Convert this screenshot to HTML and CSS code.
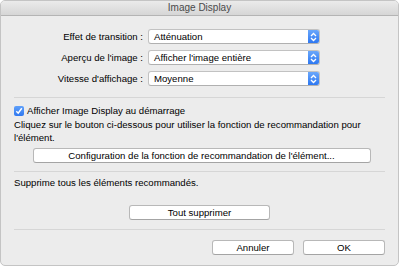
FILE: index.html
```html
<!DOCTYPE html>
<html lang="fr">
<head>
<meta charset="utf-8">
<link rel="stylesheet" href="styles.css">
</head>
<body>
<div class="window">
  <div class="titlebar">Image Display</div>
  <div class="content">
    <div class="form">
      <label class="lbl">Effet de transition :</label>
      <div class="popup"><span class="val">Atténuation</span><span class="step"><svg width="7" height="10" viewBox="0 0 7 10"><path d="M1 4 L3.5 1.5 L6 4 M1 6 L3.5 8.5 L6 6" fill="none" stroke="#fff" stroke-width="1.3"/></svg></span></div>
      <label class="lbl">Aperçu de l'image :</label>
      <div class="popup"><span class="val">Afficher l'image entière</span><span class="step"><svg width="7" height="10" viewBox="0 0 7 10"><path d="M1 4 L3.5 1.5 L6 4 M1 6 L3.5 8.5 L6 6" fill="none" stroke="#fff" stroke-width="1.3"/></svg></span></div>
      <label class="lbl">Vitesse d'affichage :</label>
      <div class="popup"><span class="val">Moyenne</span><span class="step"><svg width="7" height="10" viewBox="0 0 7 10"><path d="M1 4 L3.5 1.5 L6 4 M1 6 L3.5 8.5 L6 6" fill="none" stroke="#fff" stroke-width="1.3"/></svg></span></div>
    </div>
    <hr class="sep sep1">
    <div class="check">
      <span class="box"><svg width="8" height="8" viewBox="0 0 8 8"><path d="M1.3 4.2 L3.2 6.2 L6.8 1.3" fill="none" stroke="#fff" stroke-width="1.5"/></svg></span>
      <span>Afficher Image Display au démarrage</span>
    </div>
    <p class="para">Cliquez sur le bouton ci-dessous pour utiliser la fonction de recommandation pour l'élément.</p>
    <div class="center"><button class="btn wide">Configuration de la fonction de recommandation de l'élément...</button></div>
    <hr class="sep sep2">
    <p class="para2">Supprime tous les éléments recommandés.</p>
    <div class="center center2"><button class="btn mid">Tout supprimer</button></div>
    <hr class="sep sep3">
    <div class="actions">
      <button class="btn small">Annuler</button>
      <button class="btn small">OK</button>
    </div>
  </div>
</div>
</body>
</html>
```
FILE: styles.css
```css
html, body {
  margin: 0;
  padding: 0;
  background: #ffffff;
}
body {
  width: 399px;
  height: 267px;
  overflow: hidden;
  font-family: "Liberation Sans", Arial, sans-serif;
  font-size: 9.6px;
  color: #000;
}
.window {
  box-sizing: border-box;
  width: 399px;
  height: 266px;
  background: #ececec;
  border: 1px solid #c4c4c4;
  border-radius: 5px;
  overflow: hidden;
}
.titlebar {
  height: 14px;
  line-height: 14px;
  text-align: center;
  color: #4a4a4a;
  font-size: 10px;
  background: linear-gradient(#ebebeb, #d6d6d6);
  border-bottom: 1px solid #b4b4b4;
}
.content {
  padding: 0 13px 0 13px;
}
.form {
  display: grid;
  grid-template-columns: 129px 172px;
  column-gap: 5px;
  row-gap: 6px;
  margin-top: 13px;
  align-items: center;
}
.lbl {
  text-align: right;
  white-space: nowrap;
}
.popup {
  box-sizing: border-box;
  height: 15px;
  display: flex;
  align-items: stretch;
  background: #fff;
  border: 1px solid #c2c2c2;
  border-bottom-color: #b0b0b0;
  border-radius: 3px;
  overflow: hidden;
}
.val {
  flex: 1;
  padding-left: 5px;
  line-height: 13px;
  white-space: nowrap;
}
.step {
  width: 11px;
  display: flex;
  align-items: center;
  justify-content: center;
  background: linear-gradient(#6aa7fb, #2d78f2);
}
.sep {
  border: 0;
  border-top: 1px solid #d6d6d6;
  margin: 0;
}
.sep1 { margin-top: 11px; }
.check {
  display: flex;
  align-items: center;
  gap: 3px;
  margin-top: 7px;
  height: 11px;
}
.box {
  width: 10px;
  height: 10px;
  box-sizing: border-box;
  border-radius: 2px;
  background: linear-gradient(#5fa0fa, #2f78f0);
  display: flex;
  align-items: center;
  justify-content: center;
}
.para {
  margin: 2px 0 0 0;
  line-height: 13px;
}
.center {
  display: flex;
  justify-content: center;
  margin-top: 4px;
}
.btn {
  box-sizing: border-box;
  height: 15px;
  padding: 0;
  font: inherit;
  color: #000;
  background: #fff;
  border: 1px solid #b8b8b8;
  border-bottom-color: #a4a4a4;
  border-radius: 3px;
  line-height: 13px;
}
.wide { width: 338px; margin-left: 4px; }
.mid { width: 141px; }
.sep2 { margin-top: 8px; }
.para2 {
  margin: 4px 0 0 0;
  line-height: 13px;
}
.center2 { margin-top: 16px; }
.sep3 { margin-top: 9px; }
.actions {
  display: flex;
  justify-content: flex-end;
  gap: 9px;
  margin-top: 10px;
}
.small { width: 82px; }
```
